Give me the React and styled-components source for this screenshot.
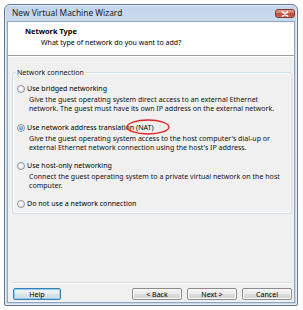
import React from "react";
import styled, { createGlobalStyle } from "styled-components";

const Global = createGlobalStyle`
  html, body { margin: 0; padding: 0; background: #ffffff; }
  body { font-family: "Noto Sans", "Open Sans", "Liberation Sans", sans-serif; color: #000; }
  * { box-sizing: border-box; }
`;

const Page = styled.div`
  width: 303px;
  height: 310px;
  padding: 4px 5px 4px 4px;
`;

const Window = styled.div`
  width: 294px;
  height: 302px;
  border: 1px solid #62788f;
  border-radius: 6px 6px 2px 2px;
  background: linear-gradient(#c3d5eb, #cbdcef 24px, #c8d9ec);
  box-shadow: inset 0 0 0 1px #e4edf7;
  display: flex;
  flex-direction: column;
  padding: 0 2px 2px 2px;
`;

const TitleBar = styled.div`
  height: 16px;
  display: flex;
  align-items: center;
  justify-content: space-between;
  padding: 0 0 0 5px;
`;

const Title = styled.span`
  font-size: 8.4px;
  color: #1c1c1c;
  line-height: 10px;
`;

const CloseBtn = styled.div`
  width: 20px;
  height: 9px;
  margin-top: 1px;
  border: 1px solid #803a33;
  border-radius: 3px;
  background: linear-gradient(#e4a396, #d0705f 45%, #bb4432 55%, #d06a56);
  display: flex;
  align-items: center;
  justify-content: center;
`;

const Client = styled.div`
  flex: 1;
  display: flex;
  flex-direction: column;
  background: #f0f0f0;
  border: 1px solid #8fa4bd;
`;

const Header = styled.div`
  height: 34px;
  background: #ffffff;
  border-bottom: 1px solid #a0a0a0;
  padding: 4px 0 0 17px;
  display: flex;
  flex-direction: column;
`;

const HeaderTitle = styled.div`
  font-size: 7.4px;
  font-weight: bold;
  line-height: 11px;
`;

const HeaderSub = styled.div`
  font-size: 7.05px;
  line-height: 11px;
  padding-left: 16px;
`;

const Body = styled.div`
  flex: 1;
  display: flex;
  flex-direction: column;
  padding: 11px 2px 0 4px;
  border-top: 1px solid #ffffff;
`;

const Group = styled.fieldset`
  margin: 0;
  min-width: 0;
  border: 1px solid #d5dfe5;
  border-radius: 3px;
  box-shadow: inset 0 0 0 1px #fafbfc;
  padding: 7px 0 5px 0;
  display: flex;
  flex-direction: column;
`;

const Legend = styled.legend`
  font-size: 7.05px;
  padding: 0 1px;
  margin-left: 3px;
  line-height: 9px;
  color: #111;
`;

const Option = styled.div`
  display: flex;
  flex-direction: column;
  padding-left: 4px;
  margin-bottom: ${(p) => p.$gap}px;
`;

const RadioRow = styled.div`
  display: flex;
  align-items: center;
  height: 9px;
`;

const Radio = styled.span`
  flex: none;
  width: 8px;
  height: 8px;
  border-radius: 50%;
  border: 1px solid #8f9398;
  background: radial-gradient(circle at 45% 40%, #ffffff, #dadde2);
  margin-right: 2px;
  display: flex;
  align-items: center;
  justify-content: center;
  &::after {
    content: "";
    display: ${(p) => (p.$checked ? "block" : "none")};
    width: 4px;
    height: 4px;
    border-radius: 50%;
    background: radial-gradient(circle at 40% 35%, #a4d4f7, #1a6cbf);
  }
`;

const Label = styled.span`
  font-size: 7.05px;
  line-height: 9px;
  white-space: nowrap;
`;

const Marked = styled.span`
  position: relative;
`;

const Ellipse = styled.svg`
  position: absolute;
  left: 50%;
  top: 50%;
  width: 44px;
  height: 16px;
  margin: -8px 0 0 -19px;
  overflow: visible;
  pointer-events: none;
`;

const Desc = styled.div`
  font-size: 7.05px;
  line-height: 9px;
  padding-left: 12px;
  margin-top: 2px;
  white-space: nowrap;
  color: #111;
`;

const Footer = styled.div`
  border-top: 1px solid #d9d9d9;
  box-shadow: inset 0 1px 0 #ffffff;
  margin-top: auto;
  height: 20px;
  display: flex;
  align-items: flex-start;
  padding: 5px 0 0 1px;
  gap: 5px;
`;

const Button = styled.button`
  width: ${(p) => p.$w}px;
  height: 12px;
  margin: 0;
  margin-left: ${(p) => p.$ml || 0}px;
  padding: 0;
  font-family: inherit;
  font-size: 7.05px;
  line-height: 10px;
  color: #000;
  border-radius: 2px;
  border: 1px solid ${(p) => (p.$focus ? "#3c7fb1" : "#8a8a8a")};
  box-shadow: ${(p) => (p.$focus ? "inset 0 0 0 1px #8fd0f2" : "inset 0 0 0 1px #fbfbfb")};
  background: ${(p) =>
    p.$focus
      ? "linear-gradient(#f2f6f9, #e8eef3 48%, #d9e3ea 52%, #cfdce5)"
      : "linear-gradient(#f4f4f4, #ebebeb 48%, #dddddd 52%, #d0d0d0)"};
`;

export default function App() {
  return (
    <Page>
      <Global />
      <Window>
        <TitleBar>
          <Title>New Virtual Machine Wizard</Title>
          <CloseBtn>
            <svg width="8" height="6" viewBox="0 0 8 6">
              <path d="M1.5 0.8 L6.5 5.2 M6.5 0.8 L1.5 5.2" stroke="#ffffff" strokeWidth="1.6" strokeLinecap="round" />
            </svg>
          </CloseBtn>
        </TitleBar>
        <Client>
          <Header>
            <HeaderTitle>Network Type</HeaderTitle>
            <HeaderSub>What type of network do you want to add?</HeaderSub>
          </Header>
          <Body>
            <Group>
              <Legend>Network connection</Legend>
              <Option $gap={10}>
                <RadioRow>
                  <Radio />
                  <Label>Use bridged networking</Label>
                </RadioRow>
                <Desc>
                  Give the guest operating system direct access to an external Ethernet
                  <br />
                  network. The guest must have its own IP address on the external network.
                </Desc>
              </Option>
              <Option $gap={9}>
                <RadioRow>
                  <Radio $checked />
                  <Label>
                    Use network address translation{" "}
                    <Marked>
                      (NAT)
                      <Ellipse viewBox="0 0 44 16">
                        <ellipse cx="22" cy="8" rx="21" ry="7" fill="none" stroke="#e3221d" strokeWidth="1.3" />
                      </Ellipse>
                    </Marked>
                  </Label>
                </RadioRow>
                <Desc>
                  Give the guest operating system access to the host computer's dial-up or
                  <br />
                  external Ethernet network connection using the host's IP address.
                </Desc>
              </Option>
              <Option $gap={9}>
                <RadioRow>
                  <Radio />
                  <Label>Use host-only networking</Label>
                </RadioRow>
                <Desc>
                  Connect the guest operating system to a private virtual network on the host
                  <br />
                  computer.
                </Desc>
              </Option>
              <Option $gap={0}>
                <RadioRow>
                  <Radio />
                  <Label>Do not use a network connection</Label>
                </RadioRow>
              </Option>
            </Group>
            <Footer>
              <Button $w={48} $focus>Help</Button>
              <Button $w={50} $ml={66}>&lt; Back</Button>
              <Button $w={50}>Next &gt;</Button>
              <Button $w={50}>Cancel</Button>
            </Footer>
          </Body>
        </Client>
      </Window>
    </Page>
  );
}
